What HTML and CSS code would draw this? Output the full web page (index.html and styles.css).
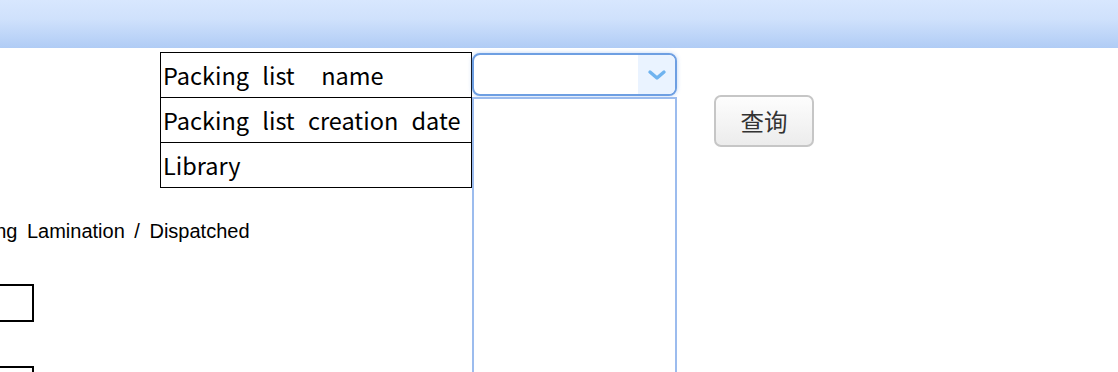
FILE: index.html
```html
<!DOCTYPE html>
<html>
<head>
<meta charset="utf-8">
<link rel="stylesheet" href="styles.css">
</head>
<body>
<div class="header"></div>
<div class="toolbar">
  <table class="fields">
    <tr><td>Packing list &nbsp;name</td></tr>
    <tr><td>Packing list creation date</td></tr>
    <tr><td>Library</td></tr>
  </table>
  <div class="select-wrap">
    <div class="select">
      <span class="select-value"></span>
      <span class="select-arrow">
        <svg width="22" height="14" viewBox="0 0 22 14"><path d="M4 4 L11 10 L18 4" fill="none" stroke="#6fb3ef" stroke-width="3.4" stroke-linecap="round" stroke-linejoin="round"/></svg>
      </span>
    </div>
    <div class="listbox"></div>
  </div>
  <button class="query">查询</button>
</div>
<p class="status">Pending Lamination / Dispatched</p>
<div class="box"></div>
<div class="box"></div>
</body>
</html>
```
FILE: styles.css
```css
html, body {
  margin: 0;
  padding: 0;
  background: #fff;
  overflow: hidden;
}
body {
  font-family: "Liberation Sans", Arial, sans-serif;
  width: 1118px;
  height: 372px;
}
.header {
  height: 48px;
  background: linear-gradient(to bottom, #d8e7fe 0%, #cfe1fc 40%, #b0ccf5 100%);
}
.toolbar {
  display: flex;
  align-items: flex-start;
  padding-left: 160px;
  margin-top: 4px;
}
.fields {
  border-collapse: collapse;
  border: 1px solid #000;
  width: 312px;
  font-family: "Noto Sans CJK SC", "Noto Sans", sans-serif;
  font-size: 23.5px;
  word-spacing: 8px;
  color: #000;
}
.fields td {
  border: 1px solid #000;
  height: 44px;
  padding: 0 2px;
  white-space: nowrap;
  line-height: 44px;
}
.select-wrap {
  position: relative;
  width: 205px;
  margin-top: 1px;
}
.select {
  display: flex;
  height: 39px;
  border: 2px solid #6e9fe2;
  border-radius: 8px;
  overflow: hidden;
  box-shadow: 0 0 4px rgba(110, 160, 230, 0.45);
  background: #fff;
}
.select-value {
  flex: 1;
}
.select-arrow {
  width: 37px;
  background: #eaf3ff;
  display: flex;
  align-items: center;
  justify-content: center;
}
.listbox {
  position: absolute;
  top: 44px;
  left: 0;
  width: 201px;
  height: 300px;
  border: 2px solid #9cbcee;
  background: #fff;
}
.query {
  margin: 43px 0 0 37px;
  width: 100px;
  height: 52px;
  border: 2px solid #c6c6c6;
  border-radius: 7px;
  background: linear-gradient(to bottom, #fdfdfd, #ececec);
  font-family: "Noto Sans CJK SC", sans-serif;
  font-size: 23.5px;
  color: #333;
  padding: 0;
}
.status {
  margin: 32px 0 0 -56px;
  font-size: 20px;
  word-spacing: 4px;
  line-height: 22px;
  color: #000;
  white-space: nowrap;
}
.box {
  width: 50px;
  height: 34px;
  margin-left: -20px;
  border: 2px solid #000;
  margin-top: 42px;
}
.box + .box {
  margin-top: 44px;
}
```
